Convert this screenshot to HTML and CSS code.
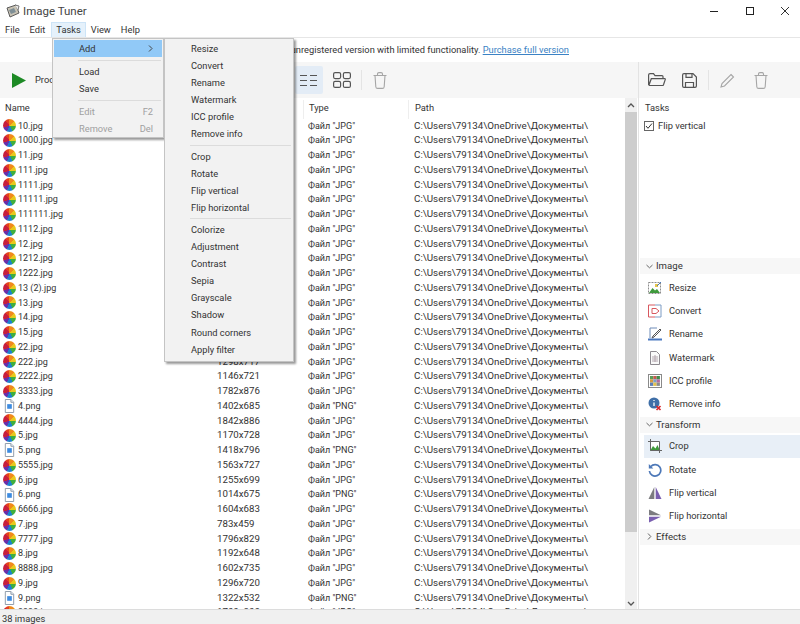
FILE: index.html
```html
<!DOCTYPE html>
<html lang="en">
<head>
<meta charset="utf-8">
<title>Image Tuner</title>
<link rel="stylesheet" href="styles.css">
</head>
<body>
<svg class="defs" width="0" height="0" aria-hidden="true">
  <symbol id="png" viewBox="0 0 14 15">
    <path d="M2.500.5h6l3 3v11h-9z" fill="#fff" stroke="#8a97a6"/>
    <path d="M8.500.5v3h3" fill="#e6ebf0" stroke="#8a97a6"/>
    <rect x="4.500" y="5.500" width="5" height="5" fill="#3d8be0"/>
  </symbol>
  <symbol id="trash" viewBox="0 0 14 17">
    <path d="M.5 3.500h13M4.500 3.500V2c0-.8.6-1.400 1.400-1.400h2.200c.8 0 1.400.6 1.400 1.400v1.500M2 3.500l.8 11.200c.1 1 .8 1.700 1.800 1.700h4.800c1 0 1.700-.7 1.800-1.700L12 3.500" fill="none" stroke="currentColor" stroke-width="1.100"/>
  </symbol>
</svg>

<header class="titlebar">
  <svg class="appicon" viewBox="0 0 14 14" width="14" height="14">
    <path d="M1 4l9-3 3 8-9 4z" fill="#c9c3b4" stroke="#5a5a5a"/>
    <path d="M3 6l5-2 2 4-5 2z" fill="#7f8f96"/>
    <path d="M9 1l4 1-1 4" fill="#eee" stroke="#777"/>
  </svg>
  <span class="apptitle">Image Tuner</span>
  <div class="wincontrols">
    <svg width="10" height="10" viewBox="0 0 10 10"><path d="M1 5.500h8" stroke="#222"/></svg>
    <svg width="10" height="10" viewBox="0 0 10 10"><rect x="1.500" y="1.500" width="7" height="7" fill="none" stroke="#222"/></svg>
    <svg width="10" height="10" viewBox="0 0 10 10"><path d="M1 1l8 8M9 1l-8 8" stroke="#333"/></svg>
  </div>
</header>

<nav class="menubar">
  <span class="menuitem">File</span>
  <span class="menuitem">Edit</span>
  <span class="menuitem menuitem-open">Tasks</span>
  <span class="menuitem">View</span>
  <span class="menuitem">Help</span>
</nav>

<div class="notice">You are using an unregistered version with limited functionality. <a class="link" href="#">Purchase full version</a></div>

<main class="workspace">
  <section class="leftpane">
    <div class="toolbar">
      <svg class="play" viewBox="0 0 14 15" width="14" height="15"><path d="M0 0l14 7.500L0 15z" fill="#1d8a25"/></svg>
      <span class="process">Process</span>
      <div class="viewbuttons">
        <span class="viewbtn viewbtn-on">
          <svg width="18" height="13" viewBox="0 0 18 13"><path d="M0 1.500h7M10 1.500h7M0 6.500h7M10 6.500h7M0 11.500h7M10 11.500h7" stroke="#555" stroke-width="1.200"/></svg>
        </span>
        <span class="viewbtn">
          <svg width="18" height="16" viewBox="0 0 18 16"><g fill="none" stroke="#555" stroke-width="1.200"><rect x=".6" y=".6" width="7" height="6" rx="1.500"/><rect x="10.400" y=".6" width="7" height="6" rx="1.500"/><rect x=".6" y="9.400" width="7" height="6" rx="1.500"/><rect x="10.400" y="9.400" width="7" height="6" rx="1.500"/></g></svg>
        </span>
        <span class="tooldiv"></span>
        <svg class="tool-off" width="14" height="17"><use href="#trash"/></svg>
      </div>
    </div>
    <div class="listarea">
      <div class="filelist">
        <div class="row head"><span>Name</span><span>Size</span><span class="cell-sep">Type</span><span class="cell-sep">Path</span></div>
        <div class="row"><span class="name"><i class="wheel"></i>10.jpg</span><span>1920x1080</span><span>Файл "JPG"</span><span>C:\Users\79134\OneDrive\Документы\</span></div>
        <div class="row"><span class="name"><i class="wheel"></i>1000.jpg</span><span>1600x900</span><span>Файл "JPG"</span><span>C:\Users\79134\OneDrive\Документы\</span></div>
        <div class="row"><span class="name"><i class="wheel"></i>11.jpg</span><span>1280x720</span><span>Файл "JPG"</span><span>C:\Users\79134\OneDrive\Документы\</span></div>
        <div class="row"><span class="name"><i class="wheel"></i>111.jpg</span><span>1366x768</span><span>Файл "JPG"</span><span>C:\Users\79134\OneDrive\Документы\</span></div>
        <div class="row"><span class="name"><i class="wheel"></i>1111.jpg</span><span>1440x900</span><span>Файл "JPG"</span><span>C:\Users\79134\OneDrive\Документы\</span></div>
        <div class="row"><span class="name"><i class="wheel"></i>11111.jpg</span><span>1536x864</span><span>Файл "JPG"</span><span>C:\Users\79134\OneDrive\Документы\</span></div>
        <div class="row"><span class="name"><i class="wheel"></i>111111.jpg</span><span>1280x800</span><span>Файл "JPG"</span><span>C:\Users\79134\OneDrive\Документы\</span></div>
        <div class="row"><span class="name"><i class="wheel"></i>1112.jpg</span><span>1400x800</span><span>Файл "JPG"</span><span>C:\Users\79134\OneDrive\Документы\</span></div>
        <div class="row"><span class="name"><i class="wheel"></i>12.jpg</span><span>1024x768</span><span>Файл "JPG"</span><span>C:\Users\79134\OneDrive\Документы\</span></div>
        <div class="row"><span class="name"><i class="wheel"></i>1212.jpg</span><span>1500x750</span><span>Файл "JPG"</span><span>C:\Users\79134\OneDrive\Документы\</span></div>
        <div class="row"><span class="name"><i class="wheel"></i>1222.jpg</span><span>1680x720</span><span>Файл "JPG"</span><span>C:\Users\79134\OneDrive\Документы\</span></div>
        <div class="row"><span class="name"><i class="wheel"></i>13 (2).jpg</span><span>1350x700</span><span>Файл "JPG"</span><span>C:\Users\79134\OneDrive\Документы\</span></div>
        <div class="row"><span class="name"><i class="wheel"></i>13.jpg</span><span>1250x700</span><span>Файл "JPG"</span><span>C:\Users\79134\OneDrive\Документы\</span></div>
        <div class="row"><span class="name"><i class="wheel"></i>14.jpg</span><span>1300x710</span><span>Файл "JPG"</span><span>C:\Users\79134\OneDrive\Документы\</span></div>
        <div class="row"><span class="name"><i class="wheel"></i>15.jpg</span><span>1450x780</span><span>Файл "JPG"</span><span>C:\Users\79134\OneDrive\Документы\</span></div>
        <div class="row"><span class="name"><i class="wheel"></i>22.jpg</span><span>1550x810</span><span>Файл "JPG"</span><span>C:\Users\79134\OneDrive\Документы\</span></div>
        <div class="row"><span class="name"><i class="wheel"></i>222.jpg</span><span>1298x717</span><span>Файл "JPG"</span><span>C:\Users\79134\OneDrive\Документы\</span></div>
        <div class="row"><span class="name"><i class="wheel"></i>2222.jpg</span><span>1146x721</span><span>Файл "JPG"</span><span>C:\Users\79134\OneDrive\Документы\</span></div>
        <div class="row"><span class="name"><i class="wheel"></i>3333.jpg</span><span>1782x876</span><span>Файл "JPG"</span><span>C:\Users\79134\OneDrive\Документы\</span></div>
        <div class="row"><span class="name"><svg class="fileicon"><use href="#png"/></svg>4.png</span><span>1402x685</span><span>Файл "PNG"</span><span>C:\Users\79134\OneDrive\Документы\</span></div>
        <div class="row"><span class="name"><i class="wheel"></i>4444.jpg</span><span>1842x886</span><span>Файл "JPG"</span><span>C:\Users\79134\OneDrive\Документы\</span></div>
        <div class="row"><span class="name"><i class="wheel"></i>5.jpg</span><span>1170x728</span><span>Файл "JPG"</span><span>C:\Users\79134\OneDrive\Документы\</span></div>
        <div class="row"><span class="name"><svg class="fileicon"><use href="#png"/></svg>5.png</span><span>1418x796</span><span>Файл "PNG"</span><span>C:\Users\79134\OneDrive\Документы\</span></div>
        <div class="row"><span class="name"><i class="wheel"></i>5555.jpg</span><span>1563x727</span><span>Файл "JPG"</span><span>C:\Users\79134\OneDrive\Документы\</span></div>
        <div class="row"><span class="name"><i class="wheel"></i>6.jpg</span><span>1255x699</span><span>Файл "JPG"</span><span>C:\Users\79134\OneDrive\Документы\</span></div>
        <div class="row"><span class="name"><svg class="fileicon"><use href="#png"/></svg>6.png</span><span>1014x675</span><span>Файл "PNG"</span><span>C:\Users\79134\OneDrive\Документы\</span></div>
        <div class="row"><span class="name"><i class="wheel"></i>6666.jpg</span><span>1604x683</span><span>Файл "JPG"</span><span>C:\Users\79134\OneDrive\Документы\</span></div>
        <div class="row"><span class="name"><i class="wheel"></i>7.jpg</span><span>783x459</span><span>Файл "JPG"</span><span>C:\Users\79134\OneDrive\Документы\</span></div>
        <div class="row"><span class="name"><i class="wheel"></i>7777.jpg</span><span>1796x829</span><span>Файл "JPG"</span><span>C:\Users\79134\OneDrive\Документы\</span></div>
        <div class="row"><span class="name"><i class="wheel"></i>8.jpg</span><span>1192x648</span><span>Файл "JPG"</span><span>C:\Users\79134\OneDrive\Документы\</span></div>
        <div class="row"><span class="name"><i class="wheel"></i>8888.jpg</span><span>1602x735</span><span>Файл "JPG"</span><span>C:\Users\79134\OneDrive\Документы\</span></div>
        <div class="row"><span class="name"><i class="wheel"></i>9.jpg</span><span>1296x720</span><span>Файл "JPG"</span><span>C:\Users\79134\OneDrive\Документы\</span></div>
        <div class="row"><span class="name"><svg class="fileicon"><use href="#png"/></svg>9.png</span><span>1322x532</span><span>Файл "PNG"</span><span>C:\Users\79134\OneDrive\Документы\</span></div>
        <div class="row"><span class="name"><i class="wheel"></i>9999.jpg</span><span>1700x800</span><span>Файл "JPG"</span><span>C:\Users\79134\OneDrive\Документы\</span></div>
      </div>
      <div class="scrollbar">
        <svg class="sarrow" width="8" height="5" viewBox="0 0 8 5"><path d="M1 4l3-3 3 3" fill="none" stroke="#555" stroke-width="1.300"/></svg>
        <div class="thumb"></div>
        <svg class="sarrow sarrow-end" width="8" height="5" viewBox="0 0 8 5"><path d="M1 1l3 3 3-3" fill="none" stroke="#555" stroke-width="1.300"/></svg>
      </div>
    </div>
  </section>

  <aside class="rightpane">
    <div class="toolbar righttools">
      <svg width="18" height="14" viewBox="0 0 18 14"><path d="M.6 12V2c0-.8.6-1.400 1.400-1.400h3.500l1.500 2h7c.7 0 1 .5 1 1v1.500M.8 12.500l2.500-6.800h13.500c.4 0 .6.300.5.700l-1.800 5.300c-.2.500-.5.800-1 .8H.8" fill="none" stroke="#555" stroke-width="1.200"/></svg>
      <svg width="15" height="15" viewBox="0 0 15 15"><g fill="none" stroke="#555" stroke-width="1.200"><path d="M2 .6h9l3.400 3.400V13c0 .8-.6 1.400-1.400 1.400H2C1.200 14.400.6 13.800.6 13V2C.6 1.200 1.200.6 2 .6z"/><path d="M4 .8v3.600h6V.8M3.500 14v-4.500h8V14"/></g></svg>
      <span class="tooldiv tooldiv-r"></span>
      <svg class="tool-off" width="15" height="15" viewBox="0 0 15 15"><path d="M11 1.500l2.500 2.500-9 9-3.500 1 1-3.500z" fill="none" stroke="currentColor" stroke-width="1.100"/></svg>
      <svg class="tool-off" width="14" height="17"><use href="#trash"/></svg>
    </div>
    <div class="tasks">
      <div class="taskhead">Tasks</div>
      <label class="taskrow">
        <svg width="10" height="10" viewBox="0 0 10 10"><rect x=".5" y=".5" width="9" height="9" fill="#fff" stroke="#666"/><path d="M2 5l2 2.300L8 2.500" fill="none" stroke="#333"/></svg>
        Flip vertical
      </label>
    </div>
    <div class="groups">
      <div class="grouphead">
        <svg width="7" height="5" viewBox="0 0 7 5"><path d="M.5 1l3 2.800L6.500 1" fill="none" stroke="#666"/></svg>
        Image
      </div>
      <div class="action">
        <svg width="14" height="14" viewBox="0 0 14 14"><rect x=".5" y="1.500" width="12" height="11" fill="#fff" stroke="#8c8c8c" stroke-dasharray="2 1"/><path d="M1 12l3.500-5 2.500 2.500L9 8l3 4z" fill="#3f9a3c"/><rect x="7" y="3" width="3" height="3" fill="#e8c64a"/><path d="M9 5l4-4" stroke="#4a78b8"/></svg>
        Resize
      </div>
      <div class="action">
        <svg width="14" height="14" viewBox="0 0 14 14"><path d="M7 1H.5v12H7" fill="none" stroke="#d8585f"/><path d="M7 1h6v12H7" fill="none" stroke="#7c9cc4"/><path d="M4 4.500h4L11 7l-3 2.500H4z" fill="#fff" stroke="#d8585f"/></svg>
        Convert
      </div>
      <div class="action">
        <svg width="14" height="14" viewBox="0 0 14 14"><path d="M2 11V1h7" fill="none" stroke="#6e8cb8"/><path d="M5 9l7-7 1 1-7 7-2 1z" fill="#f4f4f4" stroke="#555"/><path d="M0 12.500h14" stroke="#4a78c0" stroke-width="2"/></svg>
        Rename
      </div>
      <div class="action">
        <svg width="14" height="14" viewBox="0 0 14 14"><path d="M2.500.5h6l3 3v10h-9z" fill="#fafafa" stroke="#8e8a90"/><path d="M4 6h6M4 8h6M4 10h6M7 4v7" stroke="#b5a8b0"/></svg>
        Watermark
      </div>
      <div class="action">
        <svg width="14" height="14" viewBox="0 0 14 14"><rect x=".5" y=".5" width="13" height="13" fill="#fff" stroke="#8a8a8a"/><rect x="2" y="2" width="3.300" height="3.300" fill="#5b9c58"/><rect x="5.300" y="2" width="3.300" height="3.300" fill="#c85a50"/><rect x="8.600" y="2" width="3.300" height="3.300" fill="#3f8c4a"/><rect x="2" y="5.300" width="3.300" height="3.300" fill="#d89a40"/><rect x="5.300" y="5.300" width="3.300" height="3.300" fill="#7aa2c8"/><rect x="8.600" y="5.300" width="3.300" height="3.300" fill="#b66a9a"/><rect x="2" y="8.600" width="3.300" height="3.300" fill="#5f7fb5"/><rect x="5.300" y="8.600" width="3.300" height="3.300" fill="#e3c04e"/><rect x="8.600" y="8.600" width="3.300" height="3.300" fill="#8a8a8a"/></svg>
        ICC profile
      </div>
      <div class="action">
        <svg width="14" height="14" viewBox="0 0 14 14"><circle cx="6" cy="6" r="5.500" fill="#3f6fa8"/><path d="M6 3v1M6 5.500V9" stroke="#fff" stroke-width="1.300"/><path d="M8.500 9l4 4M12.500 9l-4 4" stroke="#d8262c" stroke-width="1.700"/></svg>
        Remove info
      </div>
      <div class="grouphead">
        <svg width="7" height="5" viewBox="0 0 7 5"><path d="M.5 1l3 2.800L6.500 1" fill="none" stroke="#666"/></svg>
        Transform
      </div>
      <div class="action action-on">
        <svg width="14" height="14" viewBox="0 0 14 14"><rect x="2" y="2" width="10" height="10" fill="#fff"/><path d="M2 12l3-5 2.500 2.500L9.500 6l2.500 6z" fill="#3f9a3c"/><path d="M2.500 0v11.500H14M0 2.500h11.500V14" fill="none" stroke="#666"/></svg>
        Crop
      </div>
      <div class="action">
        <svg width="14" height="14" viewBox="0 0 14 14"><path d="M2.800 3.500A5.700 5.700 0 1 1 1.400 8" fill="none" stroke="#4d78b8" stroke-width="1.700"/><path d="M.8 1v4.500h4.500z" fill="#4d78b8"/></svg>
        Rotate
      </div>
      <div class="action">
        <svg width="14" height="14" viewBox="0 0 14 14"><path d="M6.300 1v12H.5z" fill="#7c7c80"/><path d="M7.700 1v12h5.800z" fill="#7a5fb0"/></svg>
        Flip vertical
      </div>
      <div class="action">
        <svg width="14" height="14" viewBox="0 0 14 14"><path d="M1 .5l12 5.800H1z" fill="#7c7c80"/><path d="M1 7.700h12L1 13.500z" fill="#7a5fb0"/></svg>
        Flip horizontal
      </div>
      <div class="grouphead">
        <svg width="7" height="7" viewBox="0 0 5 7"><path d="M1 .5l2.800 3L1 6.500" fill="none" stroke="#666"/></svg>
        Effects
      </div>
    </div>
  </aside>
</main>

<footer class="statusbar">38 images</footer>

<div class="menu menu-tasks">
  <div class="mi mi-hot"><span>Add</span><svg width="5" height="7" viewBox="0 0 5 7"><path d="M1 .5l3 3-3 3" fill="none" stroke="#444"/></svg></div>
  <hr class="msep">
  <div class="mi"><span>Load</span></div>
  <div class="mi"><span>Save</span></div>
  <hr class="msep">
  <div class="mi mi-off"><span>Edit</span><span>F2</span></div>
  <div class="mi mi-off"><span>Remove</span><span>Del</span></div>
</div>

<div class="menu menu-add">
  <div class="mi"><span>Resize</span></div>
  <div class="mi"><span>Convert</span></div>
  <div class="mi"><span>Rename</span></div>
  <div class="mi"><span>Watermark</span></div>
  <div class="mi"><span>ICC profile</span></div>
  <div class="mi"><span>Remove info</span></div>
  <hr class="msep">
  <div class="mi"><span>Crop</span></div>
  <div class="mi"><span>Rotate</span></div>
  <div class="mi"><span>Flip vertical</span></div>
  <div class="mi"><span>Flip horizontal</span></div>
  <hr class="msep">
  <div class="mi"><span>Colorize</span></div>
  <div class="mi"><span>Adjustment</span></div>
  <div class="mi"><span>Contrast</span></div>
  <div class="mi"><span>Sepia</span></div>
  <div class="mi"><span>Grayscale</span></div>
  <div class="mi"><span>Shadow</span></div>
  <div class="mi"><span>Round corners</span></div>
  <div class="mi"><span>Apply filter</span></div>
</div>
</body>
</html>
```

FILE: styles.css
```css
* { box-sizing: border-box; }
html, body { height: 100%; }
body {
  margin: 0;
  width: 800px;
  height: 624px;
  overflow: hidden;
  display: flex;
  flex-direction: column;
  background: #fff;
  color: #333;
  font: 9.300px/14px "Roboto", "Noto Sans", sans-serif;
  position: relative;
}
.defs { position: absolute; }

.titlebar { height: 22px; display: flex; align-items: center; padding-left: 6px; flex: none; }
.appicon { margin-right: 3px; }
.apptitle { font-size: 11.500px; color: #444; }
.wincontrols { margin-left: auto; width: 81px; margin-right: 10px; display: flex; justify-content: space-between; }

.menubar { height: 16px; display: flex; padding-left: 1px; border-bottom: 1px solid #e6e6e6; flex: none; }
.menuitem { padding: 0 4px; height: 15px; line-height: 15px; margin-right: 2px; }
.menuitem-open { background: #e5f1fb; border: 1px solid #cde4f7; border-bottom: 0; line-height: 14px; margin-right: 1px; }

.notice { height: 24px; line-height: 24px; padding-left: 220px; flex: none; white-space: nowrap; }
.link { color: #3b82c4; }

.workspace { flex: 1; display: flex; min-height: 0; }
.leftpane { width: 639px; display: flex; flex-direction: column; border-right: 1px solid #e3e3e3; }
.toolbar { height: 36px; background: #f6f6f6; display: flex; align-items: center; flex: none; }
.leftpane .toolbar { padding-left: 12px; }
.play { margin-right: 9px; }
.process { width: 260px; }
.viewbuttons { display: flex; align-items: center; }
.viewbtn { width: 28px; height: 28px; display: flex; align-items: center; justify-content: center; margin-right: 5px; border-radius: 2px; }
.viewbtn-on { background: #e3ecf6; }
.tooldiv { width: 1px; height: 20px; background: #e4e4e4; margin: 0 11px 0 0; }
.tool-off { color: #a6a6a6; }

.listarea { flex: 1; min-height: 0; display: flex; padding-top: 2px; }
.filelist { flex: 1; min-width: 0; overflow: hidden; }
.row { display: grid; grid-template-columns: 217px 86px 105px 1fr; height: 14.750px; line-height: 14.750px; white-space: nowrap; }
.row span:nth-child(1) { font-size: 9px; }
.row span:nth-child(2) { font-size: 9.700px; }
.row span:nth-child(3) { padding-left: 5px; font-size: 9px; }
.row span:nth-child(4) { padding-left: 6px; font-size: 9.800px; }
.row.head { height: 18.600px; line-height: 16px; }
.row.head span { font-size: 9.300px; }
.head span:first-child { padding-left: 5px; }
.cell-sep { border-left: 1px solid #eee; }
.name { display: flex; align-items: center; padding-left: 3px; }
.wheel {
  width: 13px;
  height: 13px;
  margin-right: 2px;
  border-radius: 50%;
  flex: none;
  background: conic-gradient(#f08a1c 0 50deg, #e8c81c 50deg 95deg, #3fae3f 95deg 150deg, #1e7fd0 150deg 205deg, #6a2fa8 205deg 250deg, #c81e3c 250deg 320deg, #e3401e 320deg 360deg);
}
.fileicon { width: 13px; height: 14px; margin-right: 2px; flex: none; }

.scrollbar { width: 12px; margin-top: -2px; margin-right: 1px; background: #f0f0f0; display: flex; flex-direction: column; align-items: center; flex: none; }
.sarrow { margin-top: 5px; margin-bottom: 4px; flex: none; }
.thumb { width: 100%; height: 420px; background: #cdcdcd; }
.sarrow-end { margin-top: auto; margin-bottom: 3px; }

.rightpane { flex: 1; display: flex; flex-direction: column; }
.righttools { padding-left: 9px; }
.righttools svg:nth-of-type(1) { margin-right: 16px; }
.righttools svg:nth-of-type(2) { margin-right: 11px; }
.righttools .tooldiv-r { margin: 0 11px 0 0; }
.righttools svg:nth-of-type(3) { margin-right: 19px; }
.tasks { height: 159px; padding: 1px 5px 0 6px; }
.taskhead { height: 19px; line-height: 17px; }
.taskrow { display: flex; align-items: center; gap: 4px; height: 15px; margin-left: -1px; }
.groups { display: flex; flex-direction: column; }
.grouphead { height: 16px; margin: 1px 0 2px 1px; background: #f7f7f7; display: flex; align-items: center; gap: 3px; padding-left: 6px; flex: none; font-size: 9.600px; }
.action { height: 23.300px; display: flex; align-items: center; gap: 7px; padding-left: 4px; margin-left: 5px; flex: none; }
.action-on { background: #e8eff7; }

.statusbar { height: 15px; line-height: 17px; padding-left: 2px; background: #f0f0f0; border-top: 1px solid #dcdcdc; flex: none; }

.menu { position: absolute; background: #f2f2f2; border: 1px solid #c4c4c4; box-shadow: 2px 2px 2px rgba(0,0,0,.4); }
.menu-tasks { left: 52px; top: 38px; width: 112px; height: 100px; padding: 1px; }
.menu-add { left: 164px; top: 38px; width: 130px; height: 324px; padding: 1px 1px 0; }
.mi { height: 17.100px; line-height: 17.100px; padding: 0 9px 0 25px; display: flex; justify-content: space-between; align-items: center; }
.mi-hot { background: #91c9f7; }
.mi-off { color: #a0a0a0; }
.msep { height: 1px; margin: 2px 1px 2px 24px; border: 0; background: #dcdcdc; }
.menu-tasks .msep { margin: 3px 1px 2px 24px; }
```
